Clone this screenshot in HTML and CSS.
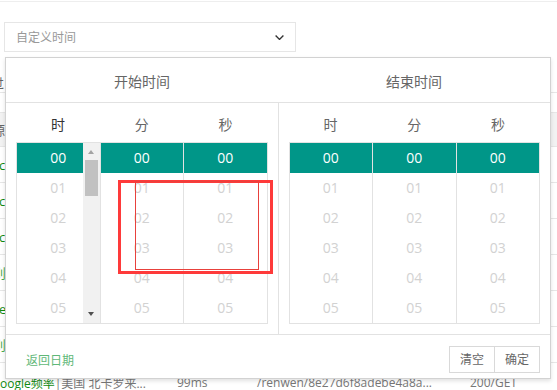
FILE: index.html
```html
<!DOCTYPE html>
<html lang="zh-CN">
<head>
<meta charset="UTF-8">
<meta name="viewport" content="width=device-width, initial-scale=1.0">
<title>自定义时间</title>
<link rel="stylesheet" href="styles.css">
</head>
<body>

<div class="topline"></div>

<!-- filter bar -->
<div class="filter">
  <div class="select">
    <span>自定义时间</span>
    <svg class="caret" viewBox="0 0 9 5"><polyline points="0.6,0.6 4.5,4.4 8.4,0.6"/></svg>
  </div>
</div>

<!-- table under the picker -->
<div class="table">
  <div class="tr pre"><span class="cut"><i style="margin-left:-9px">过</i></span></div>
  <div class="tr gap"></div>
  <div class="tr head"><span class="cut"><i style="margin-left:-8px">源</i></span></div>
  <div class="tr"><span class="cut g"><i>c</i></span></div>
  <div class="tr"><span class="cut g"><i>c</i></span></div>
  <div class="tr"><span class="cut g"><i>c</i></span></div>
  <div class="tr"><span class="cut lg"><i style="margin-left:-7px">刈</i></span></div>
  <div class="tr"><span class="cut g"><i>e</i></span></div>
  <div class="tr"><span class="cut lg"><i style="margin-left:-7px">刈</i></span></div>
  <div class="tr last">
    <span class="td"><em>oogle频率</em>|美国 北卡罗来...</span>
    <span class="td">99ms</span>
    <span class="td">/renwen/8e27d6f8adebe4a8a...</span>
    <span class="td">200/GET</span>
  </div>
</div>

<!-- time range picker -->
<div class="laydate">
  <div class="ld-head">
    <div>开始时间</div>
    <div>结束时间</div>
  </div>

  <div class="ld-body">
    <div class="ld-panel">
      <div class="ld-cols"><span class="dark">时</span><span>分</span><span>秒</span></div>
      <div class="ld-list">
        <div class="col hour">
          <ol><li class="on">00</li><li>01</li><li>02</li><li>03</li><li>04</li><li>05</li></ol>
          <div class="sbar"><i class="up"></i><b></b><i class="down"></i></div>
        </div>
        <ol class="col"><li class="on">00</li><li>01</li><li>02</li><li>03</li><li>04</li><li>05</li></ol>
        <ol class="col"><li class="on">00</li><li>01</li><li>02</li><li>03</li><li>04</li><li>05</li></ol>
      </div>
    </div>

    <div class="ld-panel">
      <div class="ld-cols"><span>时</span><span>分</span><span>秒</span></div>
      <div class="ld-list">
        <ol class="col"><li class="on">00</li><li>01</li><li>02</li><li>03</li><li>04</li><li>05</li></ol>
        <ol class="col"><li class="on">00</li><li>01</li><li>02</li><li>03</li><li>04</li><li>05</li></ol>
        <ol class="col"><li class="on">00</li><li>01</li><li>02</li><li>03</li><li>04</li><li>05</li></ol>
      </div>
    </div>
  </div>

  <div class="ld-foot">
    <span class="back">返回日期</span>
    <div class="btns"><span>清空</span><span>确定</span></div>
  </div>
</div>

<!-- annotation boxes -->
<div class="mark thick"></div>
<div class="mark thin"></div>

</body>
</html>
```

FILE: styles.css
```css
/* —— RESET —— */
*{box-sizing:border-box;margin:0;padding:0}
html,body{width:557px;height:390px;overflow:hidden;background:#fff}
body{position:relative;font-family:"Open Sans","Noto Sans CJK SC",sans-serif;color:#666}
ol{list-style:none}
i,em{font-style:normal}

/* —— TOP / FILTER —— */
.topline{height:2px;border-bottom:1px solid #eee}
.filter{padding:20px 0 0 4px}
.select{
  width:292px;height:30px;border:1px solid #e6e6e6;
  display:flex;align-items:center;justify-content:space-between;
  padding:0 11px;font-size:12px;color:#999;
}
.caret{width:9px;height:5px;fill:none;stroke:#333;stroke-width:1.4}

/* —— TABLE BEHIND —— */
.table{font-size:12px}
.tr{display:flex;align-items:center;height:36px;border-bottom:1px solid #e6e6e6}
.tr.pre{height:41px;align-items:flex-start;padding-top:23px;line-height:16px}
.tr.gap{height:20px}
.tr.head{height:34px;background:#f2f2f2}
.cut{display:block;width:5px;overflow:hidden;white-space:nowrap;font-size:13px}
.cut i{display:inline-block;margin-left:-1px}
.cut.g{color:#108a10}
.cut.lg{color:#4aa84a}
.tr.last{
  display:grid;grid-template-columns:177px 80px 213px 1fr;
  align-items:start;padding-top:11px;border:0;
}
.td{white-space:nowrap;color:#777}
.td em{color:#108a10}

/* —— LAYDATE —— */
.laydate{
  position:absolute;left:5px;top:57px;width:546px;height:322px;
  background:#fff;border:1px solid #d2d2d2;
  box-shadow:0 2px 4px rgba(0,0,0,.12);
  display:flex;flex-direction:column;
}
.ld-head{display:flex;height:45px;border-bottom:1px solid #e2e2e2}
.ld-head div{flex:1;text-align:center;padding-top:4px;line-height:40px;font-size:14px}

.ld-body{display:flex;height:231px}
.ld-panel{flex:1;padding:0 10px}
.ld-panel+.ld-panel{border-left:1px solid #e2e2e2}
.ld-cols{display:flex;height:39px;padding-top:5px;line-height:34px;font-size:14px}
.ld-cols span{flex:1;text-align:center}
.ld-cols .dark{color:#333}

.ld-list{display:flex;height:182px;border:1px solid #e2e2e2}
.col{flex:1;overflow:hidden}
.col+.col{border-left:1px solid #e2e2e2}
.col li{height:30px;line-height:30px;text-align:center;font-size:14px;color:#d2d2d2}
.col li.on{background:#009688;color:#fff}

.hour{display:flex}
.hour ol{flex:1}
.hour li{padding-left:17px}
.sbar{width:17px;background:#f1f1f1;display:flex;flex-direction:column;align-items:center}
.sbar i{width:0;height:0;border-left:3.5px solid transparent;border-right:3.5px solid transparent}
.sbar .up{margin:7px 0 6px;border-bottom:4px solid #a3a3a3}
.sbar b{width:13px;height:36px;background:#c1c1c1}
.sbar .down{margin-top:auto;margin-bottom:7px;border-top:4px solid #505050}

.ld-foot{
  flex:1;border-top:1px solid #e2e2e2;
  display:flex;align-items:center;justify-content:space-between;
  padding:6px 10px 0 20px;font-size:12px;
}
.back{color:#5fb878}
.btns{display:flex}
.btns span{height:27px;line-height:25px;padding:0 10px;border:1px solid #d9d9d9;color:#666}
.btns span+span{margin-left:-1px}

/* —— ANNOTATIONS —— */
.mark{position:absolute;z-index:2}
.thick{left:118px;top:180px;width:155px;height:94px;border:3px solid #fe3a3a}
.thin{left:135px;top:181px;width:124px;height:89px;border:1px solid #e8413c}
```
